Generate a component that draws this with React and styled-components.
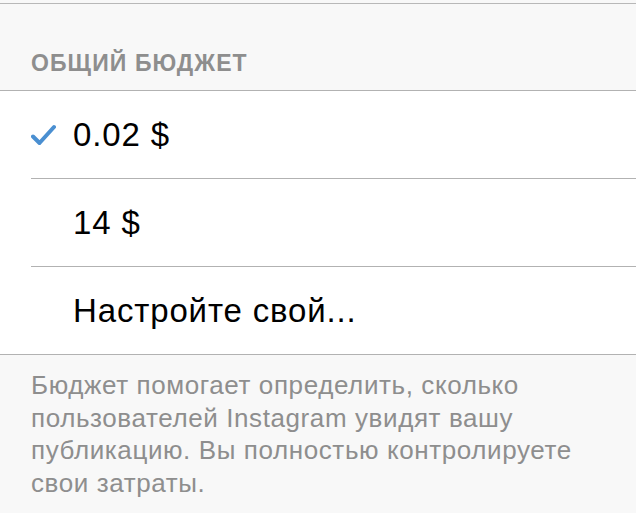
import React from "react";
import styled, { createGlobalStyle } from "styled-components";

const Global = createGlobalStyle`
  html, body { margin: 0; padding: 0; background: #f8f8f8; }
  body { font-family: "Liberation Sans", Arial, sans-serif; -webkit-font-smoothing: antialiased; }
`;

const Page = styled.div`
  width: 636px;
  height: 513px;
  overflow: hidden;
  background: #f8f8f8;
  padding-top: 3px;
  box-sizing: border-box;
`;

const SectionHeader = styled.div`
  border-top: 1px solid #b8b8b8;
  border-bottom: 1px solid #b2b2b2;
  height: 86px;
  box-sizing: content-box;
  display: flex;
  align-items: flex-end;
  padding-left: 31px;
`;

const HeaderText = styled.span`
  font-size: 23px;
  font-weight: 700;
  color: #8e8e8e;
  letter-spacing: 1.1px;
  line-height: 1;
  margin-bottom: 15px;
`;

const List = styled.div`
  background: #ffffff;
  border-bottom: 1px solid #b2b2b2;
  padding-left: 31px;
`;

const Row = styled.div`
  height: 87px;
  display: flex;
  align-items: center;
  border-bottom: ${(p) => (p.$last ? "none" : "1px solid #b2b2b2")};
`;

const CheckSlot = styled.div`
  width: 42px;
  display: flex;
  align-items: center;
`;

const RowLabel = styled.span`
  font-size: 33px;
  color: #000;
  letter-spacing: 0.85px;
  line-height: 1;
  margin-top: -1px;
`;

const Footer = styled.p`
  margin: 0;
  padding: 14px 31px 0 31px;
  font-size: 26px;
  line-height: 32.7px;
  color: #8e8e8e;
  letter-spacing: 0.6px;
`;

const Check = () => (
  <svg width="25" height="22" viewBox="0 0 25 22">
    <path
      d="M2 12.5 L8.5 19 L23 3"
      fill="none"
      stroke="#4a8fd1"
      strokeWidth="4"
      strokeLinecap="round"
      strokeLinejoin="round"
    />
  </svg>
);

const options = [
  { label: "0.02 $", selected: true },
  { label: "14 $", selected: false },
  { label: "Настройте свой...", selected: false },
];

export default function App() {
  return (
    <Page>
      <Global />
      <SectionHeader>
        <HeaderText>ОБЩИЙ БЮДЖЕТ</HeaderText>
      </SectionHeader>
      <List>
        {options.map((o, i) => (
          <Row key={o.label} $last={i === options.length - 1}>
            <CheckSlot>{o.selected && <Check />}</CheckSlot>
            <RowLabel>{o.label}</RowLabel>
          </Row>
        ))}
      </List>
      <Footer>
        Бюджет помогает определить, сколько пользователей Instagram увидят вашу
        публикацию. Вы полностью контролируете свои затраты.
      </Footer>
    </Page>
  );
}
